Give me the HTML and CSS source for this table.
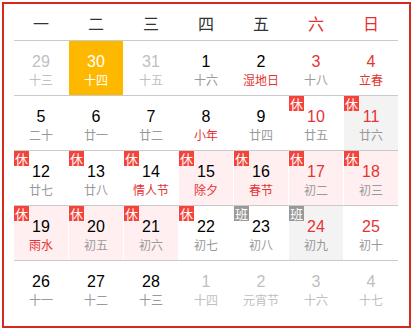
FILE: index.html
```html
<!DOCTYPE html>
<html lang="zh">
<head>
<meta charset="utf-8">
<link rel="stylesheet" href="styles.css">
</head>
<body>
<div class="cal">
  <div class="week">
    <span>一</span><span>二</span><span>三</span><span>四</span><span>五</span><span class="we">六</span><span class="we">日</span>
  </div>
  <div class="row">
    <div class="cell other"><div class="num">29</div><div class="lunar">十三</div></div>
    <div class="cell today"><div class="num">30</div><div class="lunar">十四</div></div>
    <div class="cell other"><div class="num">31</div><div class="lunar">十五</div></div>
    <div class="cell"><div class="num">1</div><div class="lunar">十六</div></div>
    <div class="cell"><div class="num">2</div><div class="lunar fest">湿地日</div></div>
    <div class="cell weekend"><div class="num">3</div><div class="lunar">十八</div></div>
    <div class="cell weekend"><div class="num">4</div><div class="lunar fest">立春</div></div>
  </div>
  <div class="row">
    <div class="cell"><div class="num">5</div><div class="lunar">二十</div></div>
    <div class="cell"><div class="num">6</div><div class="lunar">廿一</div></div>
    <div class="cell"><div class="num">7</div><div class="lunar">廿二</div></div>
    <div class="cell"><div class="num">8</div><div class="lunar fest">小年</div></div>
    <div class="cell"><div class="num">9</div><div class="lunar">廿四</div></div>
    <div class="cell weekend"><span class="badge">休</span><div class="num">10</div><div class="lunar">廿五</div></div>
    <div class="cell weekend grey"><span class="badge">休</span><div class="num">11</div><div class="lunar">廿六</div></div>
  </div>
  <div class="row">
    <div class="cell"><span class="badge">休</span><div class="num">12</div><div class="lunar">廿七</div></div>
    <div class="cell"><span class="badge">休</span><div class="num">13</div><div class="lunar">廿八</div></div>
    <div class="cell"><span class="badge">休</span><div class="num">14</div><div class="lunar fest">情人节</div></div>
    <div class="cell pink"><span class="badge">休</span><div class="num">15</div><div class="lunar fest">除夕</div></div>
    <div class="cell pink"><span class="badge">休</span><div class="num">16</div><div class="lunar fest">春节</div></div>
    <div class="cell pink weekend"><span class="badge">休</span><div class="num">17</div><div class="lunar">初二</div></div>
    <div class="cell pink weekend"><span class="badge">休</span><div class="num">18</div><div class="lunar">初三</div></div>
  </div>
  <div class="row">
    <div class="cell pink"><span class="badge">休</span><div class="num">19</div><div class="lunar fest">雨水</div></div>
    <div class="cell pink"><span class="badge">休</span><div class="num">20</div><div class="lunar">初五</div></div>
    <div class="cell pink"><span class="badge">休</span><div class="num">21</div><div class="lunar">初六</div></div>
    <div class="cell"><span class="badge">休</span><div class="num">22</div><div class="lunar">初七</div></div>
    <div class="cell"><span class="badge work">班</span><div class="num">23</div><div class="lunar">初八</div></div>
    <div class="cell weekend grey"><span class="badge work">班</span><div class="num">24</div><div class="lunar">初九</div></div>
    <div class="cell weekend"><div class="num">25</div><div class="lunar">初十</div></div>
  </div>
  <div class="row last">
    <div class="cell"><div class="num">26</div><div class="lunar">十一</div></div>
    <div class="cell"><div class="num">27</div><div class="lunar">十二</div></div>
    <div class="cell"><div class="num">28</div><div class="lunar">十三</div></div>
    <div class="cell other"><div class="num">1</div><div class="lunar">十四</div></div>
    <div class="cell other"><div class="num">2</div><div class="lunar">元宵节</div></div>
    <div class="cell other"><div class="num">3</div><div class="lunar">十六</div></div>
    <div class="cell other"><div class="num">4</div><div class="lunar">十七</div></div>
  </div>
</div>
</body>
</html>
```

FILE: styles.css
```css
* { box-sizing: border-box; }
html, body { margin: 0; padding: 0; background: #fff; }
body {
  font-family: "Liberation Sans", "Noto Sans CJK SC", sans-serif;
  color: #000;
}
.cal {
  margin: 2px;
  width: 409px;
  height: 326px;
  border: 2px solid #d42a20;
  padding: 0 11px 0 10px;
}
.week {
  display: grid;
  grid-template-columns: repeat(7, 1fr);
  column-gap: 1px;
  height: 37px;
  border-bottom: 1px solid #cacaca;
}
.week span {
  display: flex;
  align-items: center;
  justify-content: center;
  padding-top: 1px;
  font-family: "Noto Sans CJK SC", sans-serif;
  font-size: 16px;
  color: #333;
}
.week span.we { color: #e53030; }
.row {
  display: grid;
  grid-template-columns: repeat(7, 1fr);
  column-gap: 1px;
  height: 55px;
  border-bottom: 1px solid #cacaca;
}
.row.last { border-bottom: none; height: 54px; }
.cell {
  position: relative;
  display: flex;
  flex-direction: column;
  align-items: center;
  padding-top: 11px;
}
.num {
  font-size: 16px;
  line-height: 20px;
}
.lunar {
  font-family: "Noto Sans CJK SC", sans-serif;
  font-size: 12px;
  line-height: 16px;
  color: #999;
}
.lunar.fest { color: #e53333; }
.weekend .num { color: #e53333; }
.other .num, .other .lunar { color: #c0c0c0; }
.today { background: #ffb800; }
.today .num, .today .lunar { color: #fff; }
.pink { background: #ffeff0; }
.grey { background: #f3f3f3; }
.badge {
  position: absolute;
  top: 0;
  left: 0;
  width: 15px;
  height: 15px;
  background: #f4433a;
  color: #fff;
  font-family: "Noto Sans CJK SC", sans-serif;
  font-size: 13px;
  line-height: 15px;
  text-align: center;
}
.badge.work { background: #999; }
```
